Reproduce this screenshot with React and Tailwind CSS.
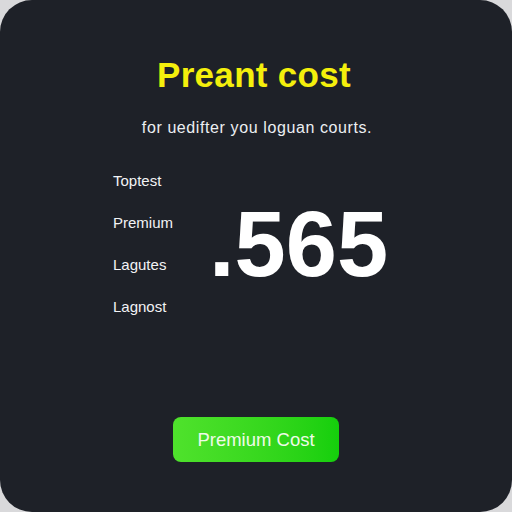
export default function App() {
  const labels = ["Toptest", "Premium", "Lagutes", "Lagnost"];
  return (
    <div className="w-[512px] h-[512px] bg-[#d9d9db]" style={{ fontFamily: '"Liberation Sans", Arial, sans-serif' }}>
      <div className="w-full h-full rounded-[32px] bg-[#1e2128] flex flex-col items-center">
        <h1 className="mt-[55px] text-[35px] leading-[40px] font-bold text-[#f4ef0c] tracking-[0.3px] pr-[4px]">Preant cost</h1>
        <p className="mt-[23px] text-[16px] leading-[20px] text-[#eceff2] tracking-[0.6px] pl-[2px]">for uedifter you loguan courts.</p>
        <div className="w-full mt-[33px] pl-[113px] flex items-center">
          <div className="flex flex-col gap-[22px] text-[15px] leading-[20px] text-[#f2f3f5]">
            {labels.map((l) => (
              <span key={l}>{l}</span>
            ))}
          </div>
          <div className="ml-[36px] text-[92px] leading-none font-bold text-white">.565</div>
        </div>
        <button className="mt-[100px] w-[166px] h-[45px] rounded-[8px] bg-gradient-to-r from-[#4fe22c] to-[#14cf0c] text-[18.5px] text-[#eefbe8]">
          Premium Cost
        </button>
      </div>
    </div>
  );
}
